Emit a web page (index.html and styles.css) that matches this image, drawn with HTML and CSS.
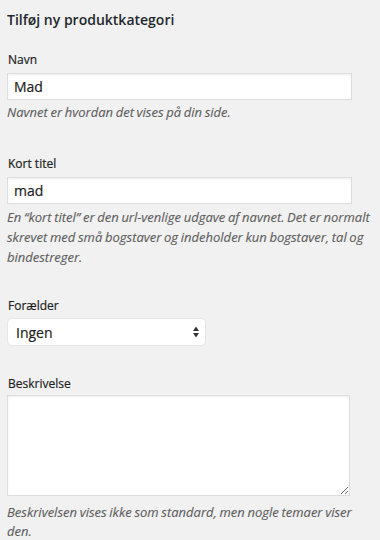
FILE: index.html
```html
<!DOCTYPE html>
<html lang="da">
<head>
<meta charset="utf-8">
<title>Tilføj ny produktkategori</title>
<link rel="stylesheet" href="styles.css">
</head>
<body>
<div class="wrap">
  <h2 class="title">Tilføj ny produktkategori</h2>

  <div class="field field-name">
    <label class="label" for="tag-name">Navn</label>
    <input class="text-input" id="tag-name" type="text" value="Mad">
    <p class="desc">Navnet er hvordan det vises på din side.</p>
  </div>

  <div class="field field-slug">
    <label class="label" for="tag-slug">Kort titel</label>
    <input class="text-input" id="tag-slug" type="text" value="mad">
    <p class="desc">En “kort titel” er den url-venlige udgave af navnet. Det er normalt<br>skrevet med små bogstaver og indeholder kun bogstaver, tal og<br>bindestreger.</p>
  </div>

  <div class="field field-parent">
    <label class="label">Forælder</label>
    <div class="select">
      <span class="select-value">Ingen</span>
      <svg class="select-arrows" width="6" height="12" viewBox="0 0 6 12" aria-hidden="true">
        <path d="M3 0.5 L6 5 L0 5 Z" fill="#333"/>
        <path d="M3 11.5 L6 7 L0 7 Z" fill="#333"/>
      </svg>
    </div>
  </div>

  <div class="field field-desc">
    <label class="label" for="tag-description">Beskrivelse</label>
    <textarea class="textarea" id="tag-description"></textarea>
    <p class="desc">Beskrivelsen vises ikke som standard, men nogle temaer viser<br>den.</p>
  </div>
</div>
</body>
</html>
```

FILE: styles.css
```css
html, body {
  margin: 0;
  padding: 0;
  background: #f1f1f1;
}

body {
  font-family: "Open Sans", "Noto Sans", sans-serif;
  color: #222;
}

.wrap {
  padding: 10px 7px 0 7px;
  display: flex;
  flex-direction: column;
}

.title {
  margin: 0;
  font-size: 14px;
  font-weight: 600;
  line-height: 20px;
  color: #23282d;
}

.field {
  display: flex;
  flex-direction: column;
  align-items: flex-start;
}

.field-name { margin-top: 20px; }
.field-slug { margin-top: 32px; }
.field-parent { margin-top: 29px; }
.field-desc { margin-top: 28px; }

.label {
  font-size: 12px;
  line-height: 20px;
  color: #1e1e1e;
  padding-left: 1px;
  -webkit-text-stroke: 0.2px currentColor;
}

.text-input {
  box-sizing: border-box;
  width: 345px;
  height: 27px;
  margin: 3px 0 0 0;
  padding: 0 6px;
  border: 1px solid #ddd;
  box-shadow: inset 0 1px 2px rgba(0, 0, 0, 0.07);
  background: #fff;
  font-family: "Open Sans", "Noto Sans", sans-serif;
  font-size: 14px;
  color: #222;
  outline: none;
  -webkit-text-stroke: 0.2px currentColor;
}

.desc {
  margin: 3px 0 0 0;
  width: 373px;
  font-size: 13px;
  line-height: 20px;
  font-style: italic;
  word-spacing: -0.7px;
  color: #5f5f5f;
  -webkit-text-stroke: 0.15px currentColor;
}

.field-name .desc { margin-top: 2px; }

.select {
  box-sizing: border-box;
  width: 199px;
  height: 28px;
  margin-top: 2px;
  display: flex;
  align-items: center;
  justify-content: space-between;
  padding: 0 6px 0 8px;
  background: #fff;
  border: 1px solid #e6e6e6;
  border-radius: 5px;
  font-size: 14px;
  color: #222;
  -webkit-text-stroke: 0.2px currentColor;
}

.select-arrows {
  display: block;
}

.textarea {
  box-sizing: border-box;
  width: 343px;
  height: 101px;
  margin: 1px 0 0 0;
  border: 1px solid #ddd;
  box-shadow: inset 0 1px 2px rgba(0, 0, 0, 0.07);
  background: #fff;
  resize: vertical;
  outline: none;
  font-family: "Open Sans", "Noto Sans", sans-serif;
}

.field-desc .desc { margin-top: 7px; line-height: 19px; }
```
